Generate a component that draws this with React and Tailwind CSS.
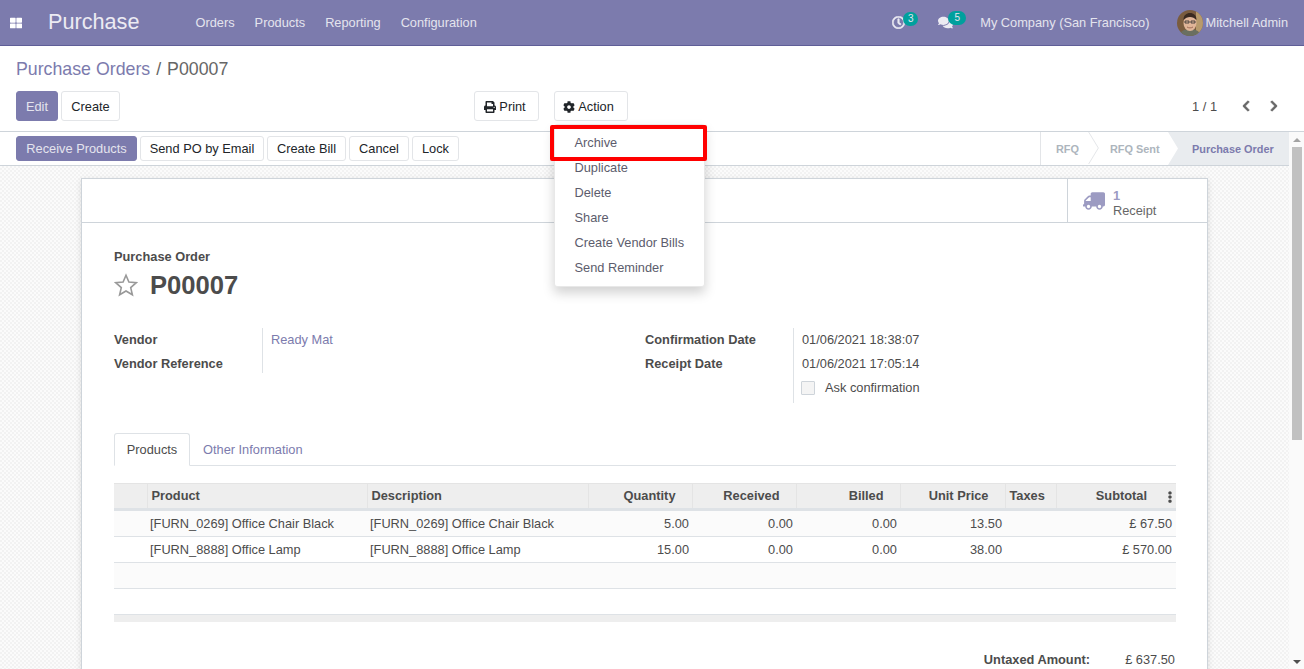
import { FaThLarge, FaPrint, FaCog, FaTruck, FaChevronLeft, FaChevronRight, FaComments, FaRegClock, FaEllipsisV } from 'react-icons/fa';

const menus = ['Orders', 'Products', 'Reporting', 'Configuration'];
const actions = ['Archive', 'Duplicate', 'Delete', 'Share', 'Create Vendor Bills', 'Send Reminder'];

const lines = [
  { id: 'FURN_0269', name: 'Office Chair Black', qty: '5.00', price: '13.50', total: '£ 67.50' },
  { id: 'FURN_8888', name: 'Office Lamp', qty: '15.00', price: '38.00', total: '£ 570.00' },
];

const Btn = ({ primary, className = '', children }) => (
  <button
    className={`rounded-[3px] border whitespace-nowrap flex items-center justify-center ${
      primary ? 'bg-[#7c7bad] border-[#7c7bad] text-[#e4e4ee]' : 'bg-white border-[#e3e5e8] text-[#212529]'
    } ${className}`}
  >
    {children}
  </button>
);

const Avatar = () => (
  <svg viewBox="0 0 26 26" className="w-[26px] h-[26px] rounded-full">
    <rect width="26" height="26" fill="#7a5c3e" />
    <rect x="19" width="7" height="26" fill="#b79a6c" />
    <path d="M3 26c0-5 4-7 10-7s10 2 10 7z" fill="#6a6f60" />
    <ellipse cx="13" cy="13" rx="6.5" ry="8" fill="#e0b598" />
    <path d="M6.5 10c0-5 3-7 6.5-7s6.5 2 6.5 7c-2-2-4-3-6.5-3s-4.500 1-6.500 3z" fill="#3a2a20" />
    <path d="M8 11h4v2H8zM14 11h4v2h-4z" fill="none" stroke="#2b2b2b" strokeWidth="0.8" />
    <path d="M10 17c2 1.200 4 1.200 6 0" stroke="#8f5a48" strokeWidth="0.8" fill="none" />
  </svg>
);

const Badge = ({ className = '', children }) => (
  <span className={`absolute top-[-4px] h-[14px] rounded-full bg-[#00a09d] text-[#e4e4ee] text-[10px] leading-[14px] text-center ${className}`}>
    {children}
  </span>
);

const Th = ({ right, className = '', children }) => (
  <th className={`h-[26px] px-[4px] font-bold text-[#4c4c4c] border-r-[1.5px] border-[#e4e4e4] ${right ? 'text-right pr-[16px]' : 'text-left'} ${className}`}>
    {children}
  </th>
);

export default function App() {
  return (
    <div className="relative w-[1304px] h-[669px] overflow-hidden bg-white text-[12.8px] text-[#4c4c4c] font-['Liberation_Sans',Arial,sans-serif]">
      {/* top nav */}
      <nav className="h-[46px] bg-[#7c7bad] border-b border-[#5f5e97] flex items-center text-[#e4e4ee]">
        <FaThLarge size={12} className="ml-[10px] text-white" />
        <span className="ml-[26px] text-[21.67px] text-[#ecebf3]">Purchase</span>
        <div className="ml-[56px] flex gap-[20px]">
          {menus.map((m) => <span key={m}>{m}</span>)}
        </div>
        <div className="ml-auto flex items-center pr-[16px]">
          <span className="relative mr-[33px]">
            <FaRegClock size={13} className="text-[#ecebf3] stroke-[24px]" />
            <Badge className="left-[11px] w-[15px]">3</Badge>
          </span>
          <span className="relative mr-[27px]">
            <FaComments size={15} className="text-[#ecebf3]" />
            <Badge className="left-[10px] w-[18px]">5</Badge>
          </span>
          <span>My Company (San Francisco)</span>
          <span className="ml-[27px] mr-[3px]"><Avatar /></span>
          <span>Mitchell Admin</span>
        </div>
      </nav>

      {/* control panel */}
      <div className="h-[86px] px-4 border-b border-[#ced4da]">
        <div className="h-[45px] pt-[12px] text-[17.75px] leading-[22px] text-[#666]">
          <span className="text-[#7c7bad]">Purchase Orders</span>
          <span className="ml-[6px]">/</span>
          <span className="ml-[6px]">P00007</span>
        </div>
        <div className="flex items-center">
          <div className="w-[458px] flex gap-[3px]">
            <Btn primary className="w-[42px] h-[30px] pt-px">Edit</Btn>
            <Btn className="w-[59px] h-[30px] pt-px">Create</Btn>
          </div>
          <Btn className="w-[65px] h-[30px] pt-px pr-[3px] gap-[3px]"><FaPrint size={12} />Print</Btn>
          <Btn className="ml-[15px] w-[74px] h-[30px] pt-px pr-[5px] gap-[3px]"><FaCog size={12} />Action</Btn>
          <span className="ml-auto mr-[23px] pt-px text-[#4c4c4c]">1 / 1</span>
          <FaChevronLeft size={12} className="text-[#666] stroke-[30px] mr-[16px]" />
          <FaChevronRight size={12} className="text-[#666] stroke-[30px] mr-[8px]" />
        </div>
      </div>

      <div className="flex h-[537px]">
        <div className="flex-1 min-w-0 flex flex-col">
          {/* status bar */}
          <div className="h-[34px] shrink-0 bg-white border-b border-[#ced4da] flex items-center pl-4">
            <div className="flex gap-[3px]">
              <Btn primary className="w-[121px] h-[25px]">Receive Products</Btn>
              <Btn className="w-[124px] h-[25px]">Send PO by Email</Btn>
              <Btn className="w-[79px] h-[25px]">Create Bill</Btn>
              <Btn className="w-[60px] h-[25px]">Cancel</Btn>
              <Btn className="w-[47px] h-[25px]">Lock</Btn>
            </div>
            <div className="ml-auto w-[249px] h-full flex items-center border-l border-[#e3e5e8] text-[10.9px] font-bold text-[#adb5bd]">
              <span className="pl-[15px] w-[47px] pt-px">RFQ</span>
              <svg viewBox="0 0 11 34" className="w-[11px] h-[33px] shrink-0">
                <path d="M0.5 0 L10.5 16.5 L0.5 33" fill="none" stroke="#e3e5e8" />
              </svg>
              <span className="pl-[11px] w-[69px] pt-px whitespace-nowrap">RFQ Sent</span>
              <span className="w-[121px] h-full pl-[24px] pt-px flex items-center whitespace-nowrap bg-[#e9ecef] text-[#7c7bad] [clip-path:polygon(0_0,100%_0,100%_100%,0_100%,10px_50%)]">
                Purchase Order
              </span>
            </div>
          </div>

          {/* form background */}
          <div className="flex-1 min-h-0 overflow-hidden pt-[12px] pl-[81px] bg-[repeating-conic-gradient(#f2f2f2_0_25%,#fbfbfb_0_50%)] bg-[length:4px_4px]">
            <div className="w-[1127px] h-[600px] bg-white border border-[#ced4da] shadow-[0_2px_6px_rgba(0,0,0,0.12)]">
              <div className="h-[44px] border-b border-[#ced4da] flex justify-end">
                <div className="w-[140px] border-l border-[#ced4da] flex items-center pl-[15px] gap-[8px]">
                  <FaTruck size={22} className="text-[#9c9bc2] -scale-x-100" />
                  <div className="leading-[15px] pt-[4px]">
                    <div className="font-bold text-[#9c9bc2]">1</div>
                    <div className="text-[#666]">Receipt</div>
                  </div>
                </div>
              </div>

              <div className="pl-[32px] pr-[31px]">
                <div className="pt-[26px] font-bold leading-[15px]">Purchase Order</div>
                <div className="flex items-center h-[34px] mt-[4px] gap-[12px]">
                  <svg viewBox="0 0 24 24" className="w-[24px] h-[24px] shrink-0">
                    <path d="M12 2.2 L14.9 9 L22.3 9.7 L16.7 14.6 L18.4 21.8 L12 18 L5.6 21.8 L7.3 14.6 L1.7 9.7 L9.1 9 Z" fill="none" stroke="#999" strokeWidth="1.6" />
                  </svg>
                  <h1 className="text-[25.6px] font-bold text-[#4c4c4c] leading-[34px]">P00007</h1>
                </div>

                {/* form groups */}
                <div className="flex mt-[26px] h-[75px]">
                  <div className="w-[531px] flex">
                    <div className="w-[149px] border-r border-[#dee2e6] h-[45px] font-bold">
                      <div className="h-[24px] pt-[2px]">Vendor</div>
                      <div className="h-[21px] pt-[2px]">Vendor Reference</div>
                    </div>
                    <div className="pl-[8px] pt-[2px] text-[#7c7bad]">Ready Mat</div>
                  </div>
                  <div className="flex">
                    <div className="w-[149px] border-r border-[#dee2e6] h-[75px] font-bold">
                      <div className="h-[24px] pt-[2px]">Confirmation Date</div>
                      <div className="h-[24px] pt-[2px]">Receipt Date</div>
                    </div>
                    <div className="pl-[8px]">
                      <div className="h-[24px] pt-[2px]">01/06/2021 18:38:07</div>
                      <div className="h-[24px] pt-[2px]">01/06/2021 17:05:14</div>
                      <div className="h-[24px] -ml-px flex items-center gap-[10px]">
                        <span className="w-[14px] h-[14px] border border-[#ced4da] bg-[#f4f4f4] rounded-[1px]" />
                        <span>Ask confirmation</span>
                      </div>
                    </div>
                  </div>
                </div>

                {/* tabs */}
                <div className="mt-[30px] h-[33px] flex border-b border-[#dee2e6]">
                  <div className="w-[76px] h-[33px] border border-[#dee2e6] border-b-white rounded-t-[3px] bg-white flex items-center justify-center">Products</div>
                  <div className="ml-[13px] h-[33px] flex items-center text-[#7c7bad]">Other Information</div>
                </div>

                {/* order lines */}
                <table className="mt-[17px] w-[1062px] table-fixed border-collapse">
                  <colgroup>
                    <col className="w-[33px]" />
                    <col className="w-[220px]" />
                    <col className="w-[221px]" />
                    <col className="w-[104px]" />
                    <col className="w-[104px]" />
                    <col className="w-[104px]" />
                    <col className="w-[105px]" />
                    <col className="w-[51px]" />
                    <col className="w-[120px]" />
                  </colgroup>
                  <thead>
                    <tr className="bg-[#eeeeee] border-t border-[#e4e4e4] border-b-[3px] border-b-[#dee2e6]">
                      <Th />
                      <Th>Product</Th>
                      <Th>Description</Th>
                      <Th right>Quantity</Th>
                      <Th right>Received</Th>
                      <Th right>Billed</Th>
                      <Th right>Unit Price</Th>
                      <Th>Taxes</Th>
                      <th className="relative pr-[29px] text-right font-bold">
                        Subtotal
                        <FaEllipsisV size={12} className="absolute right-[0px] top-[7px] text-[#4c4c4c]" />
                      </th>
                    </tr>
                  </thead>
                  <tbody>
                    {lines.map((l, i) => (
                      <tr key={l.id} className={`border-b border-[#dee2e6] ${i === 0 ? 'h-[27px] bg-[#fbfbfb]' : 'h-[26px] bg-white'}`}>
                        <td />
                        <td className="px-[3px] whitespace-nowrap">[{l.id}] {l.name}</td>
                        <td className="px-[3px] whitespace-nowrap">[{l.id}] {l.name}</td>
                        <td className="pr-[3px] text-right">{l.qty}</td>
                        <td className="pr-[3px] text-right">0.00</td>
                        <td className="pr-[3px] text-right">0.00</td>
                        <td className="pr-[3px] text-right">{l.price}</td>
                        <td />
                        <td className="pr-[4px] text-right">{l.total}</td>
                      </tr>
                    ))}
                    <tr className="h-[26px] bg-[#fbfbfb] border-b border-[#dee2e6]"><td colSpan={9} /></tr>
                    <tr className="h-[26px] bg-white border-b border-[#dee2e6]"><td colSpan={9} /></tr>
                    <tr className="h-[7px] bg-[#eeeeee]"><td colSpan={9} /></tr>
                  </tbody>
                </table>

                <div className="mt-[28px] mr-px flex justify-end">
                  <span className="font-bold">Untaxed Amount:</span>
                  <span className="w-[85px] text-right">£ 637.50</span>
                </div>
              </div>
            </div>
          </div>
        </div>

        {/* scrollbar */}
        <div className="w-[15px] shrink-0 bg-[#fafafa] pl-[3px] pr-[2px] flex flex-col items-center">
          <div className="h-[15px] shrink-0 flex items-center justify-center">
            <span className="w-0 h-0 border-x-[4px] border-x-transparent border-b-[4px] border-b-[#a3a3a3]" />
          </div>
          <div className="w-full h-[293px] shrink-0 bg-[#c1c1c1]" />
          <div className="mt-auto h-[15px] shrink-0 flex items-center justify-center">
            <span className="w-0 h-0 border-x-[4px] border-x-transparent border-t-[4px] border-t-[#505050]" />
          </div>
        </div>
      </div>

      {/* action dropdown */}
      <div className="absolute left-[554px] top-[124px] w-[151px] h-[163px] pt-[5px] bg-white rounded-[3px] border border-[#e8e8e8] shadow-[0_6px_12px_rgba(0,0,0,0.18)] text-[#5c5c6c]">
        {actions.map((a) => (
          <div key={a} className="h-[25px] pl-[19.5px] flex items-center">{a}</div>
        ))}
      </div>
      <div className="absolute left-[550px] top-[125px] w-[157px] h-[36px] border-[4px] border-[#ff0000] rounded-[2px]" />
    </div>
  );
}
